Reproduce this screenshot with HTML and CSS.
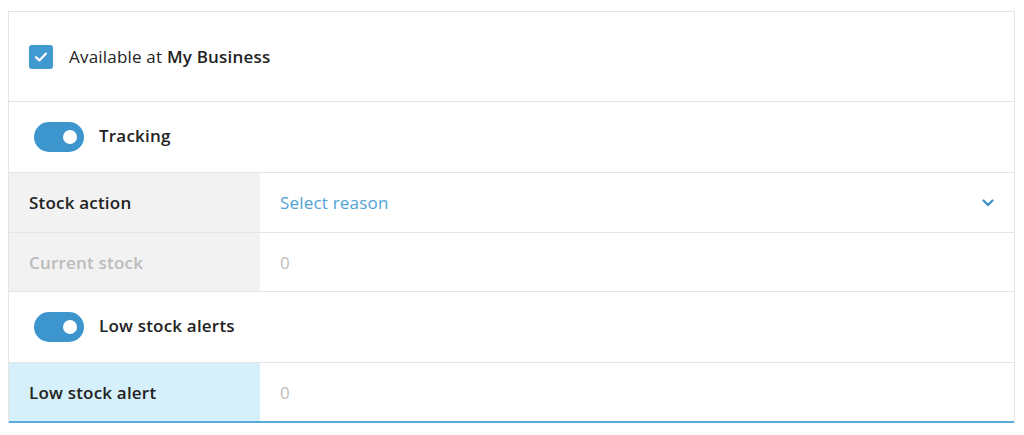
FILE: index.html
```html
<!DOCTYPE html>
<html>
<head>
<meta charset="utf-8">
<link rel="stylesheet" href="styles.css">
</head>
<body>
<div class="panel">
  <div class="row check-row">
    <span class="checkbox">
      <svg width="14" height="12" viewBox="0 0 14 12"><path d="M2 6.2 L5.4 9.4 L12 2.6" fill="none" stroke="#fff" stroke-width="2.2" stroke-linecap="round" stroke-linejoin="round"/></svg>
    </span>
    <span class="label">Available at <b>My Business</b></span>
  </div>
  <div class="row toggle-row">
    <span class="toggle"><span class="knob"></span></span>
    <span class="label strong">Tracking</span>
  </div>
  <div class="row field">
    <div class="key">Stock action</div>
    <div class="val select">Select reason
      <svg class="chev" width="12" height="8" viewBox="0 0 12 8"><path d="M1.5 1.5 L6 6 L10.5 1.5" fill="none" stroke="#3d8fc4" stroke-width="2.2" stroke-linecap="round" stroke-linejoin="round"/></svg>
    </div>
  </div>
  <div class="row field short">
    <div class="key muted">Current stock</div>
    <div class="val zero">0</div>
  </div>
  <div class="row toggle-row">
    <span class="toggle"><span class="knob"></span></span>
    <span class="label strong">Low stock alerts</span>
  </div>
  <div class="row field active">
    <div class="key">Low stock alert</div>
    <div class="val zero">0</div>
  </div>
</div>
</body>
</html>
```
FILE: styles.css
```css
html, body { margin: 0; padding: 0; background: #fff; }
body {
  font-family: "Open Sans", "Noto Sans", sans-serif;
  font-size: 17px;
  letter-spacing: 0.2px;
  color: #222;
  padding: 11px 8px 0 8px;
}
.panel {
  width: 1007px;
  border: 1px solid #e4e4e4;
  border-bottom: none;
  box-sizing: border-box;
}
.row {
  display: flex;
  align-items: center;
  border-bottom: 1px solid #e4e4e4;
  box-sizing: border-box;
}
.check-row { height: 90px; padding-left: 20px; }
.checkbox {
  width: 24px; height: 24px;
  background: #4199d2;
  border-radius: 3px;
  display: flex; align-items: center; justify-content: center;
  margin-right: 16px;
}
.label { color: #222; }
.label b { font-weight: 600; }
.strong { font-weight: 600; }
.toggle-row { height: 71px; padding-left: 25px; }
.toggle-row .label { margin-bottom: 4px; }
.toggle {
  width: 50px; height: 30px;
  background: #3d95ce;
  border-radius: 15px;
  position: relative;
  margin-right: 15px;
}
.knob {
  position: absolute;
  right: 7px; top: 8px;
  width: 14px; height: 14px;
  background: #fff;
  border-radius: 50%;
}
.field { height: 60px; }
.field.short { height: 59px; }
.key {
  width: 251px;
  align-self: stretch;
  display: flex; align-items: center;
  padding-left: 20px;
  box-sizing: border-box;
  background: #f2f2f2;
  font-weight: 600;
  color: #222;
}
.key.muted { color: #bbb; }
.val {
  flex: 1;
  padding-left: 20px;
  display: flex; align-items: center;
}
.select { color: #4fa3d4; padding-right: 20px; }
.chev { margin-left: auto; }
.zero { color: #bdbdbd; }
.active { border-bottom: 2px solid #5aa9d6; height: 60px; }
.active .key { background: #d6f0fb; }
```
